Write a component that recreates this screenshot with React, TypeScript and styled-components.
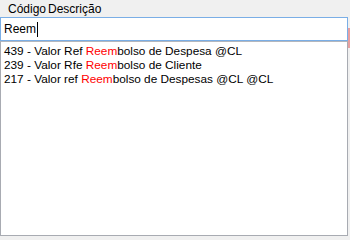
import React, { FC } from 'react';
import styled, { createGlobalStyle } from 'styled-components';

const GlobalStyle = createGlobalStyle`
  html, body {
    margin: 0;
    padding: 0;
    background: #f0f0f0;
  }
  body {
    font-family: "Liberation Sans", Arial, sans-serif;
    font-size: 12px;
    color: #000;
  }
`;

const Panel = styled.div`
  width: 350px;
  height: 240px;
  display: flex;
  flex-direction: column;
  background: #f0f0f0;
  position: relative;
  overflow: hidden;
`;

const Header = styled.div`
  height: 17px;
  display: flex;
  align-items: center;
  padding-left: 8px;
  box-sizing: border-box;
  font-size: 12px;
`;

const HeaderLabel = styled.span<{ $width?: number }>`
  display: inline-block;
  width: ${p => (p.$width ? `${p.$width}px` : 'auto')};
  line-height: 14px;
`;

const SearchBox = styled.div`
  width: 348px;
  height: 24px;
  box-sizing: border-box;
  border: 1px solid #7aaee6;
  background: #fff;
  display: flex;
  align-items: center;
  padding-left: 3px;
`;

const Caret = styled.span`
  display: inline-block;
  width: 1px;
  height: 15px;
  background: #000;
  margin-left: 1px;
`;

const SideMark = styled.div`
  position: absolute;
  top: 28px;
  right: 0;
  width: 2px;
  height: 20px;
  background: #e8a0a0;
`;

const ResultList = styled.div`
  width: 348px;
  height: 195px;
  box-sizing: border-box;
  border: 1px solid #a8abb2;
  border-top-color: #b4b7bd;
  background: #fff;
  display: flex;
  flex-direction: column;
  padding: 2px 0 0 3px;
  font-size: 11.8px;
`;

const Row = styled.div`
  height: 14px;
  line-height: 14px;
  white-space: nowrap;
`;

const Match = styled.span`
  color: #ff0000;
`;

const results = [
  { code: '439', before: 'Valor Ref ', after: 'bolso de Despesa @CL' },
  { code: '239', before: 'Valor Rfe ', after: 'bolso de Cliente' },
  { code: '217', before: 'Valor ref ', after: 'bolso de Despesas @CL @CL' },
];

const App: FC = () => {
  return (
    <>
      <GlobalStyle />
      <Panel>
        <Header>
          <HeaderLabel $width={40}>Código</HeaderLabel>
          <HeaderLabel>Descrição</HeaderLabel>
        </Header>
        <SearchBox>
          Reem<Caret />
        </SearchBox>
        <SideMark />
        <ResultList>
          {results.map(r => (
            <Row key={r.code}>
              {r.code} - {r.before}
              <Match>Reem</Match>
              {r.after}
            </Row>
          ))}
        </ResultList>
      </Panel>
    </>
  );
};

export default App;
